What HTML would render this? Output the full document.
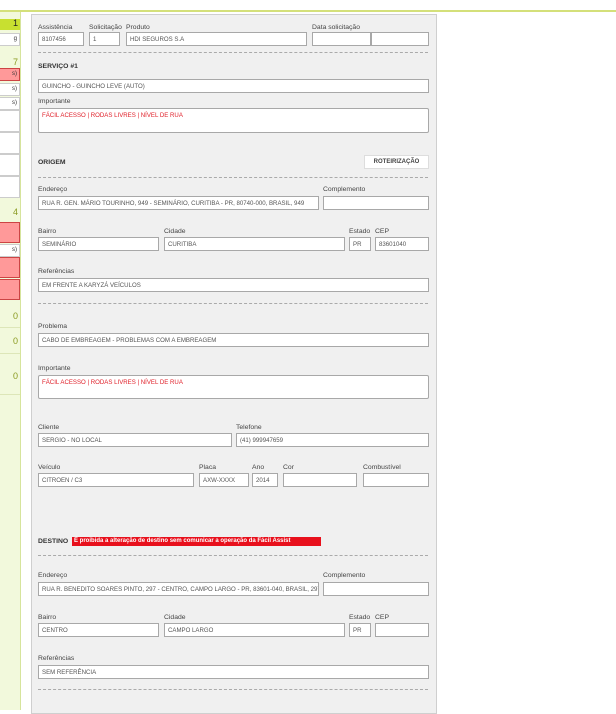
<!DOCTYPE html>
<html><head><meta charset="utf-8"><style>
*{margin:0;padding:0;box-sizing:border-box}
body{width:616px;height:710px;overflow:hidden;background:#fff;font-family:"Liberation Sans",sans-serif;position:relative}
div,span{position:absolute}
.sb{left:0;top:12px;width:21px;height:698px;background:#f2f9dc;border-right:1px solid #d6e49c}
.top{left:0;top:10px;width:616px;height:2px;background:#d4e07a}
.pn{left:31px;top:14px;width:406px;height:700px;background:#f0f0f0;border:1px solid #cfcfcf}
.l{font-size:6.8px;color:#444;white-space:nowrap}
.i{height:14px;background:#fff;border:1px solid #a8a8a8;font-size:6.1px;color:#555;padding:3px 0 0 3px;white-space:nowrap;overflow:hidden}
.t{background:#fff;border:1px solid #a8a8a8;font-size:6.1px;color:#e0202a;padding:3px 0 0 3px;white-space:nowrap;border-radius:2px}
.d{left:38px;width:390px;border-top:1px dashed #aaa;height:0}
.h{font-size:6.8px;font-weight:bold;color:#333}
.sx{left:0;width:20px;background:#fff;border:1px solid #ccc;border-left:none;font-size:6px;color:#333;text-align:right;padding-right:2px}
.sr{left:0;width:20px;background:#f99;border:1px solid #c44;border-left:none;font-size:6px;color:#333;text-align:right;padding-right:2px}
.n{left:0;width:18px;text-align:right;font-size:9px;color:#8a9a20}
</style></head><body>
<div class="top"></div>
<div class="sb"></div>
<div style="left:0;top:19px;width:20px;height:11px;background:#c8e030"></div>
<div class="n" style="top:18px;color:#222">1</div>
<div class="sx" style="top:33px;height:13px;padding-top:2px">g</div>
<div class="n" style="top:57px">7</div>
<div class="sr" style="top:68px;height:13px;padding-top:2px">s)</div>
<div class="sx" style="top:83px;height:13px;padding-top:2px">s)</div>
<div class="sx" style="top:97px;height:13px;padding-top:2px">s)</div>
<div class="sx" style="top:110px;height:22px"></div>
<div class="sx" style="top:132px;height:22px"></div>
<div class="sx" style="top:154px;height:22px"></div>
<div class="sx" style="top:176px;height:22px"></div>
<div class="n" style="top:207px">4</div>
<div class="sr" style="top:222px;height:21px"></div>
<div class="sx" style="top:244px;height:13px;padding-top:2px">s)</div>
<div class="sr" style="top:257px;height:21px"></div>
<div class="sr" style="top:279px;height:21px"></div>
<div class="n" style="top:311px">0</div>
<div style="left:0;top:327px;width:20px;border-top:1px solid #dde6b8"></div>
<div class="n" style="top:336px">0</div>
<div style="left:0;top:353px;width:20px;border-top:1px solid #dde6b8"></div>
<div class="n" style="top:371px">0</div>
<div style="left:0;top:394px;width:20px;border-top:1px solid #dde6b8"></div>

<div class="pn"></div>
<div class="l" style="left:38px;top:24px">Assistência</div>
<div class="l" style="left:89px;top:24px">Solicitação</div>
<div class="l" style="left:126px;top:24px">Produto</div>
<div class="l" style="left:312px;top:24px">Data solicitação</div>
<div class="i" style="left:38px;top:32px;width:46px">8107456</div>
<div class="i" style="left:89px;top:32px;width:31px">1</div>
<div class="i" style="left:126px;top:32px;width:181px">HDI SEGUROS S.A</div>
<div class="i" style="left:312px;top:32px;width:59px"></div>
<div class="i" style="left:371px;top:32px;width:58px"></div>
<div class="d" style="top:52px"></div>
<div class="h" style="left:38px;top:63px">SERVIÇO #1</div>
<div class="i" style="left:38px;top:79px;width:391px">GUINCHO - GUINCHO LEVE (AUTO)</div>
<div class="l" style="left:38px;top:98px">Importante</div>
<div class="t" style="left:38px;top:108px;width:391px;height:25px">FÁCIL ACESSO | RODAS LIVRES | NÍVEL DE RUA</div>
<div class="h" style="left:38px;top:159px">ORIGEM</div>
<div style="left:364px;top:155px;width:65px;height:14px;background:#fff;border:1px solid #ddd;font-size:6px;font-weight:bold;color:#444;text-align:center;padding-top:3px">ROTEIRIZAÇÃO</div>
<div class="d" style="top:177px"></div>
<div class="l" style="left:38px;top:186px">Endereço</div>
<div class="l" style="left:323px;top:186px">Complemento</div>
<div class="i" style="left:38px;top:196px;width:281px">RUA R. GEN. MÁRIO TOURINHO, 949 - SEMINÁRIO, CURITIBA - PR, 80740-000, BRASIL, 949</div>
<div class="i" style="left:323px;top:196px;width:106px"></div>
<div class="l" style="left:38px;top:228px">Bairro</div>
<div class="l" style="left:164px;top:228px">Cidade</div>
<div class="l" style="left:349px;top:228px">Estado</div>
<div class="l" style="left:375px;top:228px">CEP</div>
<div class="i" style="left:38px;top:237px;width:121px">SEMINÁRIO</div>
<div class="i" style="left:164px;top:237px;width:181px">CURITIBA</div>
<div class="i" style="left:349px;top:237px;width:22px">PR</div>
<div class="i" style="left:375px;top:237px;width:54px">83601040</div>
<div class="l" style="left:38px;top:268px">Referências</div>
<div class="i" style="left:38px;top:278px;width:391px">EM FRENTE A KARYZÁ VEÍCULOS</div>
<div class="d" style="top:303px"></div>
<div class="l" style="left:38px;top:323px">Problema</div>
<div class="i" style="left:38px;top:333px;width:391px">CABO DE EMBREAGEM - PROBLEMAS COM A EMBREAGEM</div>
<div class="l" style="left:38px;top:365px">Importante</div>
<div class="t" style="left:38px;top:375px;width:391px;height:24px">FÁCIL ACESSO | RODAS LIVRES | NÍVEL DE RUA</div>
<div class="l" style="left:38px;top:424px">Cliente</div>
<div class="l" style="left:236px;top:424px">Telefone</div>
<div class="i" style="left:38px;top:433px;width:194px">SERGIO - NO LOCAL</div>
<div class="i" style="left:236px;top:433px;width:193px">(41) 999947659</div>
<div class="l" style="left:38px;top:464px">Veículo</div>
<div class="l" style="left:199px;top:464px">Placa</div>
<div class="l" style="left:252px;top:464px">Ano</div>
<div class="l" style="left:283px;top:464px">Cor</div>
<div class="l" style="left:363px;top:464px">Combustível</div>
<div class="i" style="left:38px;top:473px;width:156px">CITROEN / C3</div>
<div class="i" style="left:199px;top:473px;width:50px">AXW-XXXX</div>
<div class="i" style="left:252px;top:473px;width:26px">2014</div>
<div class="i" style="left:283px;top:473px;width:74px"></div>
<div class="i" style="left:363px;top:473px;width:66px"></div>
<div class="h" style="left:38px;top:538px">DESTINO</div>
<div style="left:72px;top:537px;width:249px;height:9px;background:#e8101c;color:#fff;font-size:6px;font-weight:bold;padding-left:2px;white-space:nowrap;line-height:9px">É proibida a alteração de destino sem comunicar a operação da Fácil Assist</div>
<div class="d" style="top:555px"></div>
<div class="l" style="left:38px;top:572px">Endereço</div>
<div class="l" style="left:323px;top:572px">Complemento</div>
<div class="i" style="left:38px;top:582px;width:281px">RUA R. BENEDITO SOARES PINTO, 297 - CENTRO, CAMPO LARGO - PR, 83601-040, BRASIL, 297</div>
<div class="i" style="left:323px;top:582px;width:106px"></div>
<div class="l" style="left:38px;top:614px">Bairro</div>
<div class="l" style="left:164px;top:614px">Cidade</div>
<div class="l" style="left:349px;top:614px">Estado</div>
<div class="l" style="left:375px;top:614px">CEP</div>
<div class="i" style="left:38px;top:623px;width:121px">CENTRO</div>
<div class="i" style="left:164px;top:623px;width:181px">CAMPO LARGO</div>
<div class="i" style="left:349px;top:623px;width:22px">PR</div>
<div class="i" style="left:375px;top:623px;width:54px"></div>
<div class="l" style="left:38px;top:655px">Referências</div>
<div class="i" style="left:38px;top:665px;width:391px">SEM REFERÊNCIA</div>
<div class="d" style="top:689px"></div>
</body></html>
